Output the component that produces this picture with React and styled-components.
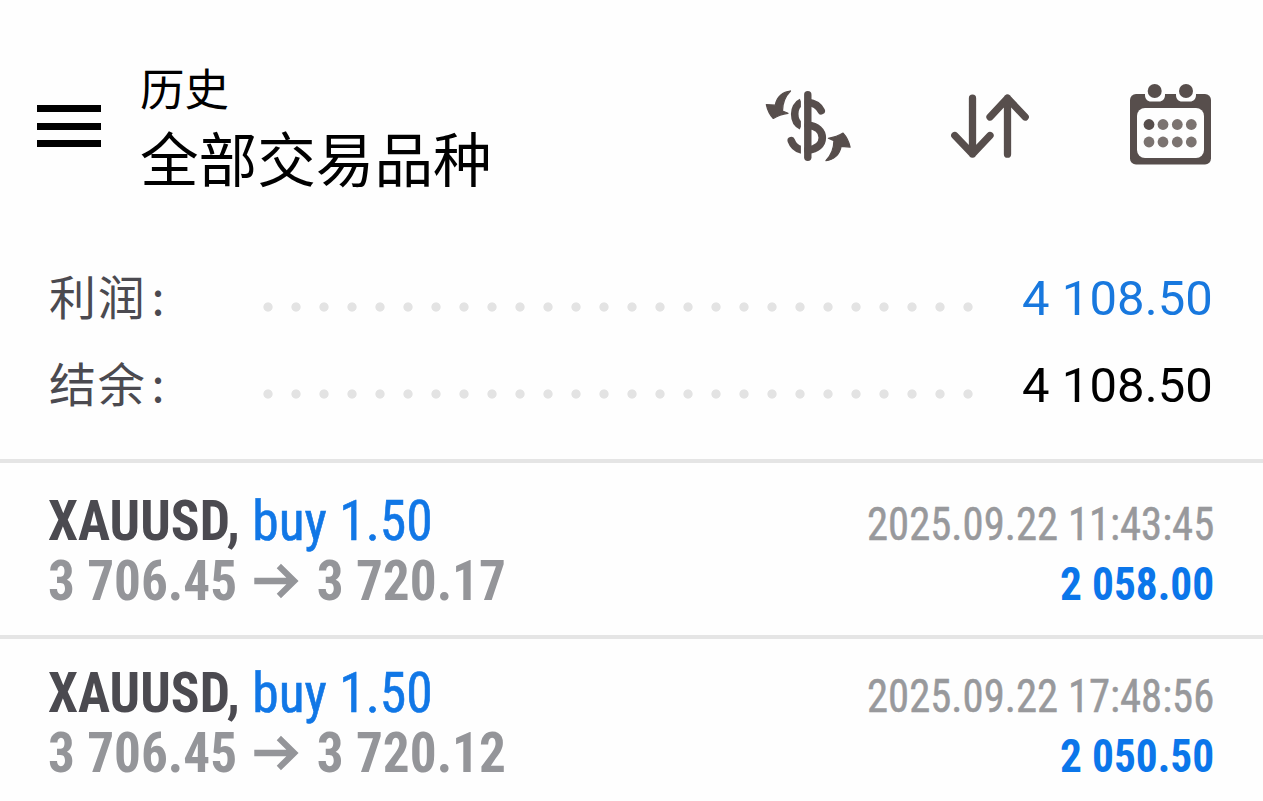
import styled, { createGlobalStyle } from 'styled-components';

const GlobalStyle = createGlobalStyle`
  body {
    margin: 0;
    background: #fefefe;
    overflow: hidden;
  }
`;

const Page = styled.div`
  box-sizing: border-box;
  width: 1263px;
  height: 801px;
  overflow: hidden;
  font-family: Roboto, 'Noto Sans CJK SC', sans-serif;
  color: #000;
`;

const Header = styled.header`
  box-sizing: border-box;
  display: flex;
  align-items: flex-start;
  height: 255px;
  padding: 60px 51px 0 37px;
`;

const MenuButton = styled.button`
  display: flex;
  flex-direction: column;
  gap: 10.5px;
  width: 64px;
  margin: 45px 39px 0 0;
  padding: 0;
  border: 0;
  background: none;
`;

const MenuBar = styled.span`
  height: 7px;
  background: #000;
`;

const Titles = styled.div`
  display: flex;
  flex: 1;
  flex-direction: column;
  font-family: 'Noto Sans CJK SC', sans-serif;
`;

const Title = styled.span`
  font-size: 44.5px;
  line-height: 54px;
`;

const Subtitle = styled.span`
  font-size: 58.6px;
  line-height: 86px;
`;

const Actions = styled.nav`
  display: flex;
  align-items: flex-start;
  padding-top: 20px;
`;

const ActionIcon = styled.svg`
  display: block;
  width: ${(p) => p.$width}px;
  height: 90px;
  margin-left: ${(p) => p.$gap || 0}px;
  color: #574e4c;
`;

const Summary = styled.section`
  box-sizing: border-box;
  display: flex;
  flex-direction: column;
  height: 204px;
  padding: 0 50px 0 49px;
`;

const SummaryRow = styled.div`
  display: flex;
  align-items: center;
  height: 87px;
`;

const SummaryLabel = styled.span`
  width: 211px;
  padding-bottom: 7px;
  font-family: 'Noto Sans CJK SC', sans-serif;
  font-size: 47px;
  line-height: 80px;
  letter-spacing: 1.8px;
  color: #4b4a50;
`;

const Colon = styled.span`
  margin-left: 5px;
`;

const Leader = styled.span`
  width: 728px;
  height: 10px;
  margin-top: 16px;
  background: radial-gradient(circle at 8px 5px, #e3e3e3 4.2px, transparent 5px) 0 0 / 28px 10px;
`;

const SummaryValue = styled.span`
  flex: 1;
  font-size: 49px;
  letter-spacing: 0.1px;
  text-align: right;
  white-space: nowrap;
  color: ${(p) => (p.$profit ? '#1878de' : '#000')};
`;

const Deal = styled.article`
  box-sizing: border-box;
  display: flex;
  justify-content: space-between;
  height: ${(p) => (p.$first ? 176 : 172)}px;
  padding: ${(p) => (p.$first ? 28 : 24)}px 49px 0 48px;
  border-top: 4px solid #e5e5e5;
  font-family: 'Roboto Condensed', Roboto, sans-serif;
  font-stretch: 75%;
  white-space: nowrap;
`;

const DealSide = styled.div`
  display: flex;
  flex-direction: column;
  align-items: ${(p) => (p.$end ? 'flex-end' : 'flex-start')};
  padding-top: ${(p) => (p.$end ? 2.5 : 0)}px;
`;

const Symbol = styled.div`
  font-size: 56px;
  font-weight: 700;
  line-height: 60px;
  color: #4b4a50;
  transform: scaleX(0.957);
  transform-origin: left;
`;

const Volume = styled.span`
  font-weight: 400;
  color: #1177e6;
  -webkit-text-stroke: 0.6px #1177e6;
`;

const Prices = styled.div`
  display: flex;
  align-items: center;
  font-size: 56px;
  font-weight: 700;
  line-height: 60px;
  color: #949599;
  transform: scaleX(0.95);
  transform-origin: left;
`;

const Arrow = styled.svg`
  width: 48px;
  height: 36px;
  margin: 0 18px;
`;

const Time = styled.div`
  font-size: 46.5px;
  line-height: 60px;
  color: #98999c;
  -webkit-text-stroke: 0.5px #98999c;
  transform: scaleX(0.918);
  transform-origin: right;
`;

const Profit = styled.div`
  font-size: 46.5px;
  font-weight: 700;
  line-height: 60px;
  color: #0b76ea;
  transform: scaleX(0.933);
  transform-origin: right;
`;

const totals = [
  { label: '利润', value: '4 108.50', profit: true },
  { label: '结余', value: '4 108.50' },
];

const deals = [
  { symbol: 'XAUUSD', volume: 'buy 1.50', open: '3 706.45', close: '3 720.17', time: '2025.09.22 11:43:45', profit: '2 058.00' },
  { symbol: 'XAUUSD', volume: 'buy 1.50', open: '3 706.45', close: '3 720.12', time: '2025.09.22 17:48:56', profit: '2 050.50' },
];

const swapArrow =
  'M29.5 11C22 11.5 15.5 17 14.3 25.2L5.3 24.5C6.5 30 9 35 12.3 38.5C17 35.5 22 34 27 33.3L21.5 31C21.5 23 24 16.5 29.5 11Z';

function CurrencyIcon() {
  return (
    <ActionIcon $width={90} viewBox="0 0 90 90">
      <g fill="none" stroke="currentColor" strokeWidth="7.6" strokeLinecap="round">
        <path d="M47 22.3C53 23 57.5 25.5 60.2 30.7M47 45.2C56 46 61.3 51 61.3 57.8S56 69 47 70.2" />
        <path d="M40.3 22.3C31.5 26 31.5 42 40.3 46" strokeLinecap="butt" />
        <path d="M30.3 60.7C32 65.5 35 68.5 40.3 69.8" />
      </g>
      <path d="M41.6 10v70" stroke="#fefefe" strokeWidth="3.4" />
      <path d="M46.8 14.8V77.2" stroke="currentColor" strokeWidth="7.4" strokeLinecap="round" />
      <g fill="currentColor" stroke="currentColor" strokeWidth="1.2" strokeLinejoin="round">
        <path d={swapArrow} />
        <path d={swapArrow} transform="rotate(180 47.2 45.8)" />
      </g>
    </ActionIcon>
  );
}

function SortIcon() {
  return (
    <ActionIcon $width={82} $gap={98} viewBox="0 0 82 90">
      <path
        fill="none"
        stroke="currentColor"
        strokeWidth="7.3"
        strokeLinecap="round"
        strokeLinejoin="round"
        d="M23.5 18.2V74M5.8 55.5L23.5 74L41 55.5M58.5 74.2V18.2M41 37L58.5 18.2L76.2 37"
      />
    </ActionIcon>
  );
}

function CalendarIcon() {
  return (
    <ActionIcon $width={82} $gap={99} viewBox="0 0 82 90">
      <rect x="0" y="14" width="81" height="70.5" rx="6" fill="currentColor" />
      <path
        fill="#fefefe"
        d="M15 12H35V15C35 19 32.5 21.5 29 21.5H21C17.5 21.5 15 19 15 15ZM46 12H66V15C66 19 63.5 21.5 60 21.5H52C48.5 21.5 46 19 46 15Z"
      />
      <circle cx="24.7" cy="11" r="7" fill="currentColor" />
      <circle cx="56" cy="11" r="7" fill="currentColor" />
      <rect x="7" y="28" width="67" height="50" rx="8" fill="#fefefe" />
      {[44.5, 62].map((cy) =>
        [19, 33, 47.3, 61.3].map((cx) => (
          <circle key={`${cx}-${cy}`} cx={cx} cy={cy} r="5.4" fill={cx === 19 && cy < 50 ? '#574e4c' : '#7b7370'} />
        ))
      )}
    </ActionIcon>
  );
}

export default function App() {
  return (
    <Page>
      <GlobalStyle />
      <Header>
        <MenuButton>
          <MenuBar />
          <MenuBar />
          <MenuBar />
        </MenuButton>
        <Titles>
          <Title>历史</Title>
          <Subtitle>全部交易品种</Subtitle>
        </Titles>
        <Actions>
          <CurrencyIcon />
          <SortIcon />
          <CalendarIcon />
        </Actions>
      </Header>
      <Summary>
        {totals.map((row) => (
          <SummaryRow key={row.label}>
            <SummaryLabel>
              {row.label}
              <Colon>:</Colon>
            </SummaryLabel>
            <Leader />
            <SummaryValue $profit={row.profit}>{row.value}</SummaryValue>
          </SummaryRow>
        ))}
      </Summary>
      {deals.map((deal, i) => (
        <Deal key={deal.time} $first={i === 0}>
          <DealSide>
            <Symbol>
              {deal.symbol}, <Volume>{deal.volume}</Volume>
            </Symbol>
            <Prices>
              {deal.open}
              <Arrow viewBox="0 0 48 36">
                <path fill="none" stroke="currentColor" strokeWidth="6.5" d="M0 18H42M26 3L42 18L26 33" />
              </Arrow>
              {deal.close}
            </Prices>
          </DealSide>
          <DealSide $end>
            <Time>{deal.time}</Time>
            <Profit>{deal.profit}</Profit>
          </DealSide>
        </Deal>
      ))}
    </Page>
  );
}
